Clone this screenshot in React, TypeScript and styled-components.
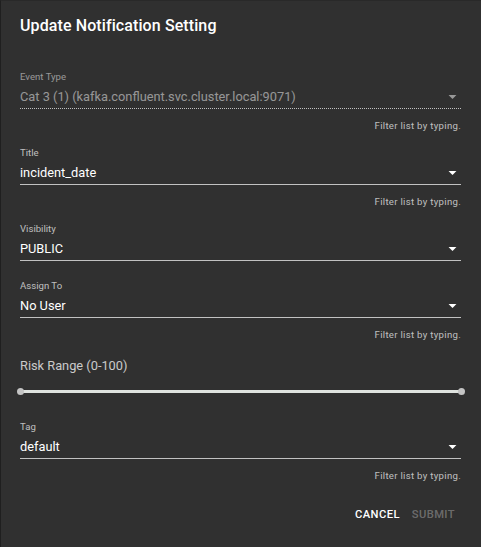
import React from "react";
import styled, { createGlobalStyle } from "styled-components";

const Global = createGlobalStyle`
  html, body { margin: 0; padding: 0; background: #303030; }
  body { font-family: Roboto, "Liberation Sans", Arial, sans-serif; }
  * { box-sizing: border-box; }
`;

const Dialog = styled.div`
  width: 481px;
  height: 547px;
  background: #303030;
  border-left: 1px solid #1f1f1f;
  border-top: 1px solid #292929;
  display: flex;
  flex-direction: column;
  overflow: hidden;
`;

const Title = styled.h2`
  margin: 0;
  padding: 12px 19px 0;
  height: 70px;
  font-size: 16px;
  line-height: 26px;
  font-weight: 500;
  color: #ffffff;
  letter-spacing: 0.1px;
`;

const Content = styled.div`
  padding: 0 20px 0 19px;
  display: flex;
  flex-direction: column;
`;

const Field = styled.div<{ $gap: number }>`
  display: flex;
  flex-direction: column;
  margin-bottom: ${(p) => p.$gap}px;
`;

const Label = styled.label<{ $disabled?: boolean }>`
  font-size: 9.6px;
  line-height: 12px;
  height: 12px;
  color: ${(p) => (p.$disabled ? "rgba(255,255,255,0.5)" : "rgba(255,255,255,0.7)")};
`;

const InputRow = styled.div<{ $disabled?: boolean }>`
  margin-top: 2px;
  height: 24px;
  display: flex;
  align-items: center;
  border-bottom: 1px ${(p) => (p.$disabled ? "dotted" : "solid")}
    rgba(255, 255, 255, 0.7);
`;

const Value = styled.span<{ $disabled?: boolean }>`
  flex: 1;
  font-size: 12.8px;
  line-height: 16px;
  padding-top: 1px;
  color: ${(p) => (p.$disabled ? "rgba(255,255,255,0.5)" : "#ffffff")};
  white-space: nowrap;
`;

const Arrow = styled.svg<{ $disabled?: boolean }>`
  width: 19px;
  height: 19px;
  margin-right: -1px;
  fill: ${(p) => (p.$disabled ? "rgba(255,255,255,0.5)" : "#ffffff")};
  flex: none;
`;

const Helper = styled.p`
  margin: 11px 0 0;
  font-size: 9.6px;
  line-height: 12px;
  height: 12px;
  text-align: right;
  letter-spacing: 0.3px;
  color: rgba(255,255,255,0.7);
`;

const RangeLabel = styled.div`
  margin-top: 17px;
  font-size: 12.8px;
  line-height: 16px;
  color: rgba(255,255,255,0.75);
`;

const Slider = styled.div`
  position: relative;
  margin-top: 12px;
  height: 10px;
  margin-bottom: 25px;
  display: flex;
  align-items: center;
`;

const Track = styled.div`
  flex: 1;
  height: 3px;
  background: #dfe3df;
`;

const Thumb = styled.span<{ $side: "left" | "right" }>`
  position: absolute;
  top: 1.5px;
  ${(p) => (p.$side === "left" ? "left: -3.5px;" : "right: -3.5px;")}
  width: 7px;
  height: 7px;
  border-radius: 50%;
  background: #c4c4c4;
`;

const Actions = styled.div`
  margin-top: 18px;
  display: flex;
  justify-content: flex-end;
  gap: 0;
  padding-right: 20px;
`;

const Button = styled.button<{ $disabled?: boolean }>`
  min-width: 51px;
  height: 29px;
  padding: 0 6px;
  border: none;
  background: transparent;
  font-family: Roboto, "Liberation Sans", Arial, sans-serif;
  font-size: 11.2px;
  font-weight: 500;
  letter-spacing: 0.4px;
  text-transform: uppercase;
  color: ${(p) => (p.$disabled ? "rgba(255,255,255,0.3)" : "#ffffff")};
  cursor: ${(p) => (p.$disabled ? "default" : "pointer")};
`;

const DropArrow = ({ disabled }: { disabled?: boolean }) => (
  <Arrow $disabled={disabled} viewBox="0 0 24 24">
    <path d="M7 10l5 5 5-5z" />
  </Arrow>
);

type SelectProps = {
  label: string;
  value: string;
  disabled?: boolean;
  helper?: boolean;
  gap: number;
};

const SelectField = ({ label, value, disabled, helper, gap }: SelectProps) => (
  <Field $gap={gap}>
    <Label $disabled={disabled}>{label}</Label>
    <InputRow $disabled={disabled}>
      <Value $disabled={disabled}>{value}</Value>
      <DropArrow disabled={disabled} />
    </InputRow>
    {helper && <Helper>Filter list by typing.</Helper>}
  </Field>
);

export default function App() {
  return (
    <>
      <Global />
      <Dialog>
        <Title>Update Notification Setting</Title>
        <Content>
          <SelectField
            label="Event Type"
            value="Cat 3 (1) (kafka.confluent.svc.cluster.local:9071)"
            disabled
            helper
            gap={15}
          />
          <SelectField label="Title" value="incident_date" helper gap={15} />
          <SelectField label="Visibility" value="PUBLIC" gap={19} />
          <SelectField label="Assign To" value="No User" helper gap={0} />
          <RangeLabel>Risk Range (0-100)</RangeLabel>
          <Slider>
            <Track />
            <Thumb $side="left" />
            <Thumb $side="right" />
          </Slider>
          <SelectField label="Tag" value="default" helper gap={0} />
        </Content>
        <Actions>
          <Button>Cancel</Button>
          <Button $disabled disabled>
            Submit
          </Button>
        </Actions>
      </Dialog>
    </>
  );
}
